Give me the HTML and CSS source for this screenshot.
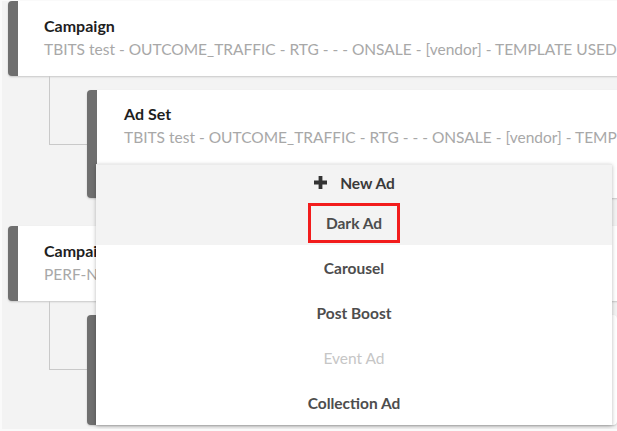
FILE: index.html
```html
<!DOCTYPE html>
<html>
<head>
<meta charset="utf-8">
<link rel="stylesheet" href="styles.css">
</head>
<body>
<div class="tree">
  <div class="campaign-group">
    <div class="card campaign">
      <div class="card-title">Campaign</div>
      <div class="card-sub">TBITS test - OUTCOME_TRAFFIC - RTG - - - ONSALE - [vendor] - TEMPLATE USED</div>
    </div>
    <div class="branch">
      <div class="elbow"></div>
      <div class="card adset">
        <div class="adset-head">
          <div class="card-title">Ad Set</div>
          <div class="card-sub">TBITS test - OUTCOME_TRAFFIC - RTG - - - ONSALE - [vendor] - TEMPLATE USED</div>
        </div>
        <div class="menu">
          <div class="menu-head">
            <svg class="plus" width="15" height="15" viewBox="0 0 15 15"><path d="M7.5 1v13M1 7.5h13" stroke="#333" stroke-width="3.8" stroke-linecap="butt"/></svg>
            <span>New Ad</span>
          </div>
          <div class="menu-item hover"><span class="highlight">Dark Ad</span></div>
          <div class="menu-item">Carousel</div>
          <div class="menu-item">Post Boost</div>
          <div class="menu-item disabled">Event Ad</div>
          <div class="menu-item">Collection Ad</div>
        </div>
      </div>
    </div>
  </div>
  <div class="campaign-group">
    <div class="card campaign">
      <div class="card-title">Campaign</div>
      <div class="card-sub short">PERF-NSW</div>
    </div>
    <div class="branch">
      <div class="elbow"></div>
      <div class="card adset tall"></div>
    </div>
  </div>
</div>
</body>
</html>
```
FILE: styles.css
```css
html, body {
  margin: 0;
  padding: 0;
  background: #fafafa;
  overflow: hidden;
  height: 431px;
}
body {
  font-family: Lato, "Open Sans", sans-serif;
}
.tree {
  margin: 1px 0 0 2px;
  background: #f3f3f3;
  height: 428px;
  display: flex;
  flex-direction: column;
  gap: 28px;
  overflow: hidden;
}
.campaign-group {
  padding-left: 6px;
}
.card {
  background: #fff;
  border-left: 10px solid #6f6f6f;
  border-radius: 4px;
  box-shadow: 0 1px 2px rgba(0,0,0,0.18);
  width: 800px;
  box-sizing: border-box;
}
.campaign {
  height: 75px;
  padding: 15px 0 0 26px;
}
.card-title {
  font-size: 16px;
  font-weight: 700;
  color: #1e1e1e;
  line-height: 20px;
}
.card-sub {
  font-size: 15.5px;
  color: #a8a8a8;
  line-height: 24px;
  margin-top: 1px;
  white-space: nowrap;
}
.branch {
  display: flex;
  align-items: flex-start;
}
.elbow {
  width: 39px;
  height: 69px;
  margin-left: 41px;
  border-left: 1px solid #c9c9c9;
  border-bottom: 1px solid #c9c9c9;
  box-sizing: border-box;
  flex: none;
}
.adset {
  margin-top: 14px;
  height: 108px;
  position: relative;
  margin-left: -1px;
}
.adset.tall {
  height: 110px;
}
.adset-head {
  height: 74px;
  padding: 14px 0 0 27px;
  box-sizing: border-box;
}
.menu {
  position: absolute;
  left: -1px;
  top: 74px;
  width: 516px;
  background: #fff;
  box-shadow: 0 1px 4px rgba(0,0,0,0.28);
  z-index: 2;
  color: #4d4d4d;
  font-size: 15.5px;
  font-weight: 700;
}
.menu-head {
  height: 36px;
  background: #f3f3f3;
  border-top: 1px solid #ebebeb;
  box-sizing: border-box;
  display: flex;
  align-items: center;
  justify-content: center;
  gap: 12px;
  color: #3a3a3a;
}
.plus {
  display: block;
}
.menu-item {
  height: 45px;
  display: flex;
  align-items: center;
  justify-content: center;
}
.menu-item.hover {
  background: #f3f3f3;
}
.menu-item.disabled {
  color: #c6c6c6;
  font-weight: 400;
}
.highlight {
  border: 3px solid #f21c1c;
  padding: 8px 15px;
  line-height: 18px;
}
```
